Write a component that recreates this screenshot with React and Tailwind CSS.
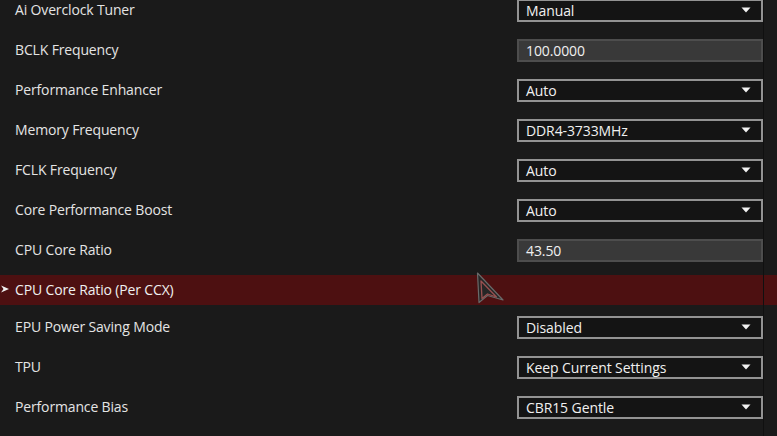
import React from "react";

const rowsTop = [
  { label: "Ai Overclock Tuner", type: "select", value: "Manual" },
  { label: "BCLK Frequency", type: "input", value: "100.0000" },
  { label: "Performance Enhancer", type: "select", value: "Auto" },
  { label: "Memory Frequency", type: "select", value: "DDR4-3733MHz" },
  { label: "FCLK Frequency", type: "select", value: "Auto" },
  { label: "Core Performance Boost", type: "select", value: "Auto" },
  { label: "CPU Core Ratio", type: "input", value: "43.50" },
];

const rowsBottom = [
  { label: "EPU Power Saving Mode", type: "select", value: "Disabled" },
  { label: "TPU", type: "select", value: "Keep Current Settings" },
  { label: "Performance Bias", type: "select", value: "CBR15 Gentle" },
];

function Caret() {
  return (
    <svg width="10" height="6" viewBox="0 0 10 6" className="shrink-0">
      <polygon points="0.5,0.5 9.5,0.5 5,5.5" fill="#f2f2f2" />
    </svg>
  );
}

function Row({ label, type, value }) {
  return (
    <div className="flex h-[40px] items-center shrink-0">
      <div className="pl-[15px] w-[517px] shrink-0 text-[14px] tracking-[-0.15px] text-[#e4e4e4] mb-[1px]">{label}</div>
      {type === "select" ? (
        <div className="w-[246px] h-[23px] border-2 border-[#939393] bg-[#141414] flex items-center justify-between pl-[7px] pr-[10px] text-[14px] tracking-[-0.1px] text-[#f0f0f0]">
          <span>{value}</span>
          <Caret />
        </div>
      ) : (
        <div className="w-[246px] h-[23px] border-2 border-[#4d4d4d] bg-[#393939] flex items-center pl-[7px] text-[14px] tracking-[-0.1px] text-[#f0f0f0]">
          <span>{value}</span>
        </div>
      )}
    </div>
  );
}

export default function App() {
  return (
    <div
      className="w-[777px] h-[436px] overflow-hidden bg-[#1a1a1a] relative"
      style={{ fontFamily: '"Open Sans", "Noto Sans", sans-serif' }}
    >
      <div className="flex flex-col -mt-[10px]">
        {rowsTop.map((r) => (
          <Row key={r.label} {...r} />
        ))}
        <div className="mt-[5px] mb-[2px] h-[30px] bg-[#4d1011] flex items-center relative">
          <svg width="8" height="8" viewBox="0 0 8 8" className="absolute left-[1px] top-[10px]">
            <polygon points="0,0.5 8,4 0,7.5 2.5,4" fill="#f0f0f0" />
          </svg>
          <div className="pl-[15px] text-[14px] tracking-[-0.15px] text-[#f0f0f0] mb-[1px]">CPU Core Ratio (Per CCX)</div>
        </div>
        {rowsBottom.map((r) => (
          <Row key={r.label} {...r} />
        ))}
      </div>
      <div className="absolute left-[763px] top-0 w-[1px] h-[436px] bg-[#101010]" />
      <svg
        width="30"
        height="34"
        viewBox="0 0 30 34"
        className="absolute left-[476px] top-[271px]"
      >
        <polygon points="1.5,2 27,29 11.5,24.5 3,31.5" fill="#262626" stroke="#6a6a6a" strokeWidth="1.2" strokeLinejoin="round" />
        <polygon points="5,10 20.5,26 11.5,23 6,27.5" fill="none" stroke="#9a5050" strokeWidth="1.3" strokeLinejoin="round" />
      </svg>
    </div>
  );
}
